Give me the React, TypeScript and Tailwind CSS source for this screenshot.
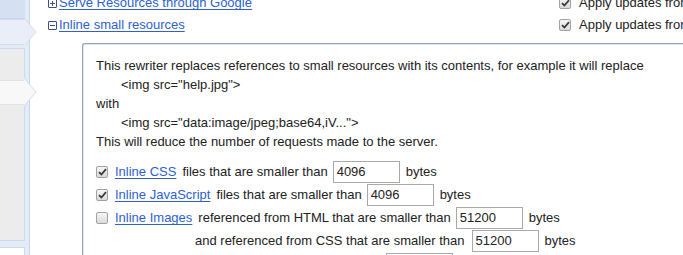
import React from "react";

const font = { fontFamily: '"Liberation Sans", Arial, sans-serif' };

function Check({ checked }: { checked: boolean }) {
  return (
    <span className="relative inline-flex h-[12px] w-[12px] shrink-0 items-center justify-center rounded-[2px] border border-[#a2a2a2] bg-gradient-to-b from-[#f6f6f6] to-[#dadada]">
      {checked && (
        <svg width="9" height="8" viewBox="0 0 9 8" className="block">
          <path d="M1 4.2 L3.4 6.5 L8 1.2" fill="none" stroke="#3a3a3a" strokeWidth="1.8" />
        </svg>
      )}
    </span>
  );
}

function BoxIcon({ open }: { open: boolean }) {
  return (
    <span className="relative inline-block h-[9px] w-[9px] shrink-0 rounded-[1px] border border-[#3d4f86] bg-white">
      <span className="absolute left-[1px] top-[3px] h-[1px] w-[5px] bg-[#3d4f86]" />
      {!open && <span className="absolute left-[3px] top-[1px] h-[5px] w-[1px] bg-[#3d4f86]" />}
    </span>
  );
}

function Arrow({ top, fill }: { top: number; fill: string }) {
  return (
    <svg
      width="13"
      height="27"
      viewBox="0 0 13 27"
      className="absolute left-[24px]"
      style={{ top }}
    >
      <polygon points="0,0 1,0 12,13 1,26 0,26" fill={fill} />
      <polyline points="1,0 12,13 1,26" fill="none" stroke="#d3dcef" strokeWidth="1" />
    </svg>
  );
}

function SizeInput({ value }: { value: string }) {
  return (
    <span className="inline-flex h-[22px] w-[67px] shrink-0 items-center border border-[#a9a9a9] bg-white pl-[3px] text-[13px] text-[#222]">
      {value}
    </span>
  );
}

function Link({ children }: { children: React.ReactNode }) {
  return <span className="whitespace-nowrap text-[#2f5fd0] underline underline-offset-[2px]">{children}</span>;
}

export default function App() {
  return (
    <div className="flex h-[255px] w-[683px] overflow-hidden bg-white text-[13px] text-[#222]" style={font}>
      {/* sidebar */}
      <div className="relative flex w-[30px] shrink-0">
        <div className="flex w-[25px] flex-col gap-[3px] bg-[#e3eaf8]">
          <div className="h-[19px] shrink-0 border-b border-[#c7d4ee] bg-[#d6e0f3]" />
          <div className="-mt-[3px] h-[26px] shrink-0 border-y border-[#d3dcef] bg-[#e9eef9]" />
          <div className="flex h-[193px] shrink-0 flex-col border border-l-0 border-[#cfd9ee] bg-[#ececec] pt-[31px]">
            <div className="h-[25px] shrink-0 border-y border-[#e2e2e2] bg-[#f8f8f8]" />
          </div>
          <div className="mt-[3px] h-[20px] shrink-0 border border-l-0 border-[#cfd9ee] bg-white" />
        </div>
        <div className="w-[5px] border-r border-[#c9d6ef] bg-[#e3eaf8]" />
        <Arrow top={19} fill="#e9eef9" />
        <Arrow top={79} fill="#f8f8f8" />
      </div>

      {/* main */}
      <div className="flex min-w-0 flex-1 flex-col">
        <div className="-mt-[8px] flex h-[22px] shrink-0 items-center pl-[18px]">
          <div className="flex w-[511px] shrink-0 items-center gap-[2px]">
            <BoxIcon open={false} />
            <Link>Serve Resources through Google</Link>
          </div>
          <div className="flex shrink-0 items-center gap-[8px] whitespace-nowrap">
            <Check checked />
            <span>Apply updates from Google automatically</span>
          </div>
        </div>
        <div className="flex h-[22px] shrink-0 items-center pl-[18px]">
          <div className="flex w-[511px] shrink-0 items-center gap-[2px]">
            <BoxIcon open />
            <Link>Inline small resources</Link>
          </div>
          <div className="flex shrink-0 items-center gap-[8px] whitespace-nowrap">
            <Check checked />
            <span>Apply updates from Google automatically</span>
          </div>
        </div>

        <div className="ml-[52px] mt-[7px] w-[700px] shrink-0 rounded-tl-[3px] border-l border-t border-[#93a3c6] pl-[13px] pt-[12px] shadow-[inset_1px_1px_0_#dfe5f1]">
          <div className="leading-[19px]">
            <p className="whitespace-nowrap">
              This rewriter replaces references to small resources with its contents, for example it will replace
            </p>
            <p className="pl-[25px]">&lt;img src="help.jpg"&gt;</p>
            <p>with</p>
            <p className="pl-[25px]">&lt;img src="data:image/jpeg;base64,iV..."&gt;</p>
            <p>This will reduce the number of requests made to the server.</p>
          </div>

          <div className="mt-[10px] flex flex-col gap-[1px]">
            <div className="flex h-[22px] shrink-0 items-center">
              <Check checked />
              <span className="ml-[7px]">
                <Link>Inline CSS</Link>
              </span>
              <span className="ml-[6px] whitespace-nowrap">files that are smaller than</span>
              <span className="ml-[5px]">
                <SizeInput value="4096" />
              </span>
              <span className="ml-[6px]">bytes</span>
            </div>
            <div className="flex h-[22px] shrink-0 items-center">
              <Check checked />
              <span className="ml-[7px]">
                <Link>Inline JavaScript</Link>
              </span>
              <span className="ml-[6px] whitespace-nowrap">files that are smaller than</span>
              <span className="ml-[5px]">
                <SizeInput value="4096" />
              </span>
              <span className="ml-[6px]">bytes</span>
            </div>
            <div className="flex h-[22px] shrink-0 items-center">
              <Check checked={false} />
              <span className="ml-[7px]">
                <Link>Inline Images</Link>
              </span>
              <span className="ml-[6px] whitespace-nowrap">referenced from HTML that are smaller than</span>
              <span className="ml-[5px]">
                <SizeInput value="51200" />
              </span>
              <span className="ml-[6px]">bytes</span>
            </div>
            <div className="flex h-[22px] shrink-0 items-center pl-[99px]">
              <span className="whitespace-nowrap">and referenced from CSS that are smaller than</span>
              <span className="ml-[7px]">
                <SizeInput value="51200" />
              </span>
              <span className="ml-[6px]">bytes</span>
            </div>
            <div className="flex h-[22px] shrink-0 items-center pl-[290px]">
              <SizeInput value="" />
            </div>
          </div>
        </div>
      </div>
    </div>
  );
}
